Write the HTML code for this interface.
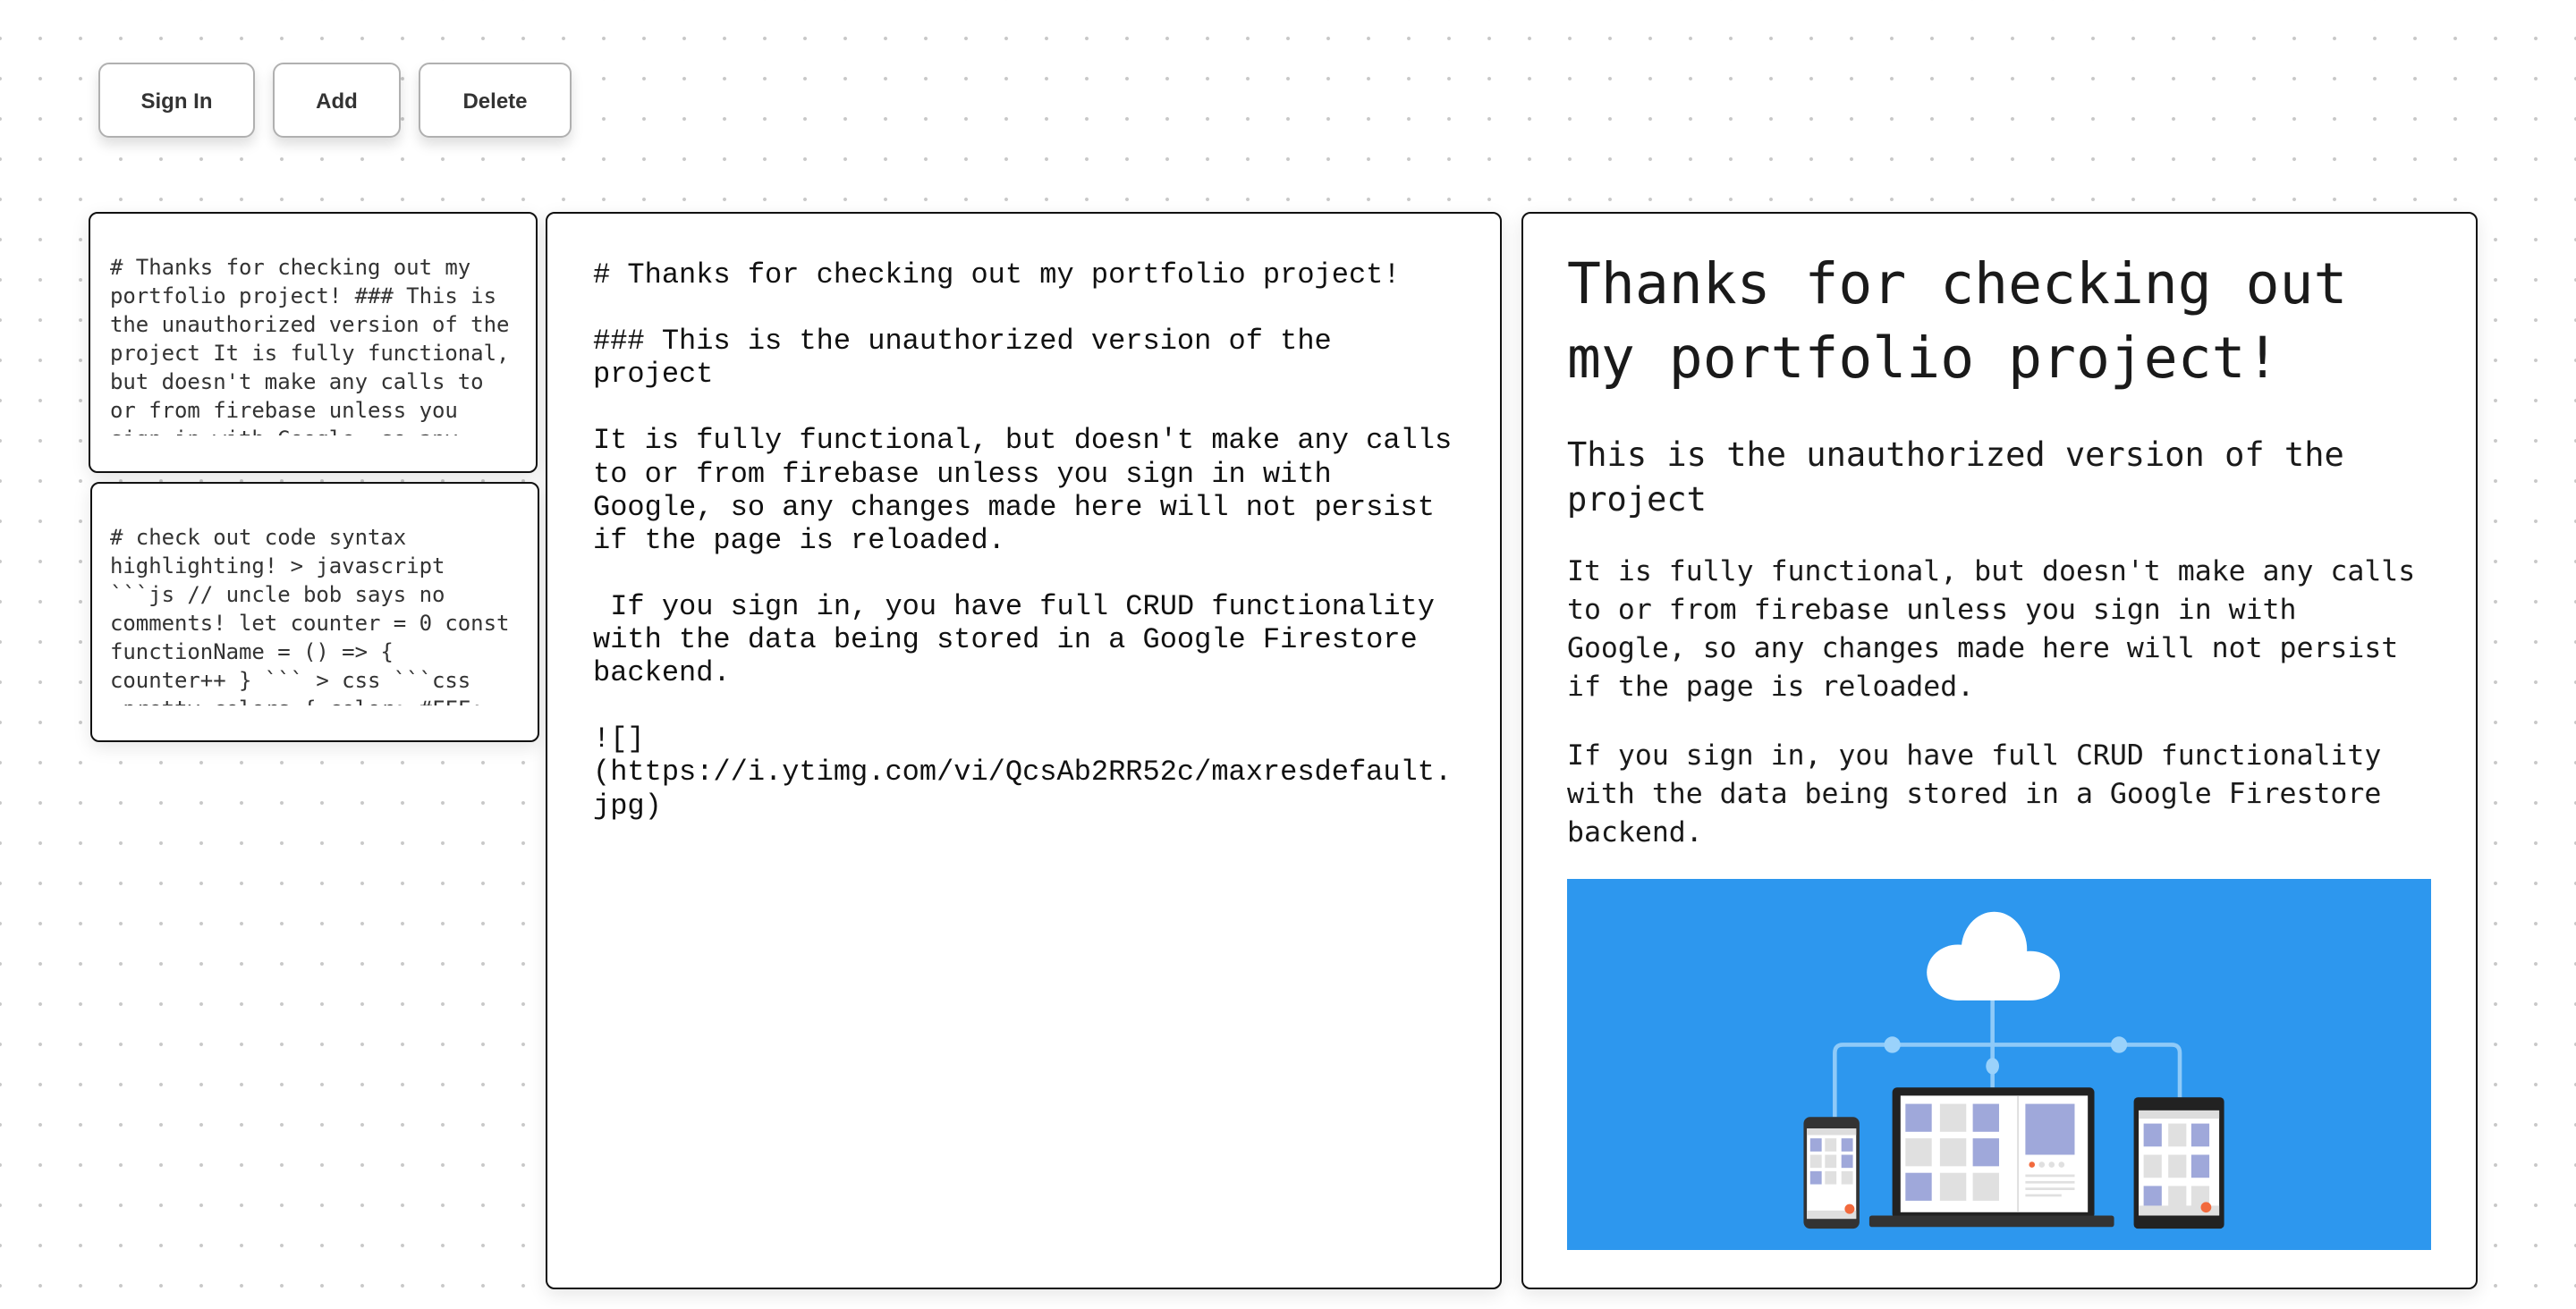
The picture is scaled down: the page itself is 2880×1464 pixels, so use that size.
<!DOCTYPE html>
<html><head><meta charset="utf-8"><style>
html,body{margin:0;padding:0}
body{width:2880px;height:1464px;position:relative;overflow:hidden;background:#fff;
background-image:radial-gradient(circle,#c8c8c8 1.7px,transparent 2.3px);background-size:45px 45px;background-position:-22.5px 20.5px}
.btn{position:absolute;top:70px;height:84px;background:#fff;border:2px solid #b0b0b0;border-radius:12px;box-shadow:0 8px 14px rgba(0,0,0,.13);font:bold 24px "Liberation Sans",sans-serif;color:#333;display:flex;align-items:center;justify-content:center;box-sizing:border-box;padding-top:4px}
.card{position:absolute;background:#fff;border:2px solid #111;border-radius:10px;box-sizing:border-box;box-shadow:0 6px 20px rgba(0,0,0,.10)}
.sm{position:absolute;left:123px;width:470px;height:204px;overflow:hidden;font:24px/32px "DejaVu Sans Mono",monospace;color:#333;white-space:pre;letter-spacing:-0.05px}
.mid{position:absolute;left:663px;top:289px;font:32px/37.1px "Liberation Mono",monospace;color:#111;white-space:pre}
.r{position:absolute;left:1752px;font-family:"DejaVu Sans Mono",monospace;color:#1a1a1a;white-space:pre}
</style></head><body>
<div class="btn" style="left:110px;width:175px">Sign In</div>
<div class="btn" style="left:305px;width:143px">Add</div>
<div class="btn" style="left:468px;width:171px">Delete</div>

<div class="card" style="left:99px;top:237px;width:502px;height:292px"></div>
<div class="sm" style="top:283px"># Thanks for checking out my
portfolio project! ### This is
the unauthorized version of the
project It is fully functional,
but doesn't make any calls to
or from firebase unless you
sign in with Google, so any</div>
<div class="card" style="left:101px;top:539px;width:502px;height:291px"></div>
<div class="sm" style="top:585px"># check out code syntax
highlighting! &gt; javascript
&#96;&#96;&#96;js // uncle bob says no
comments! let counter = 0 const
functionName = () =&gt; {
counter++ } &#96;&#96;&#96; &gt; css &#96;&#96;&#96;css
.pretty-colors { color: #FFF;</div>

<div class="card" style="left:610px;top:237px;width:1069px;height:1205px"></div>
<div class="mid"># Thanks for checking out my portfolio project!

### This is the unauthorized version of the
project

It is fully functional, but doesn't make any calls
to or from firebase unless you sign in with
Google, so any changes made here will not persist
if the page is reloaded.

 If you sign in, you have full CRUD functionality
with the data being stored in a Google Firestore
backend.

![]
(https://i.ytimg.com/vi/QcsAb2RR52c/maxresdefault.
jpg)</div>

<div class="card" style="left:1701px;top:237px;width:1069px;height:1205px"></div>
<div class="r" style="top:276px;font-size:63px;line-height:83px;font-weight:500">Thanks for checking out
my portfolio project!</div>
<div class="r" style="top:484px;font-size:37px;line-height:50px">This is the unauthorized version of the
project</div>
<div class="r" style="top:618px;font-size:31.5px;line-height:43px">It is fully functional, but doesn't make any calls
to or from firebase unless you sign in with
Google, so any changes made here will not persist
if the page is reloaded.</div>
<div class="r" style="top:824px;font-size:31.5px;line-height:43px">If you sign in, you have full CRUD functionality
with the data being stored in a Google Firestore
backend.</div>

<svg style="position:absolute;left:1752px;top:983px" width="966" height="415" viewBox="954 535 526 226" preserveAspectRatio="none">
<rect x="954" y="535" width="526" height="226" fill="#2d97ee"/>
<g fill="none" stroke="#8fcaf8" stroke-width="2.5">
<path d="M1213 605 V662"/>
<path d="M1117 680 V641 Q1117 636 1122 636 H1322 Q1327 636 1327 641 V668"/>
</g>
<g fill="#9ad2fb"><ellipse cx="1152" cy="636" rx="5" ry="5"/><ellipse cx="1290" cy="636" rx="5" ry="5"/><ellipse cx="1213" cy="649" rx="4" ry="5"/></g>
<g fill="#fff">
<ellipse cx="1214" cy="578" rx="20" ry="23"/>
<ellipse cx="1192" cy="592" rx="19" ry="17"/>
<ellipse cx="1236" cy="594" rx="18" ry="15"/>
<rect x="1186" y="590" width="54" height="19" rx="6"/>
</g>
<rect x="1152" y="662" width="123" height="80" rx="3" fill="#222"/>
<rect x="1157" y="667" width="114" height="71" fill="#fff"/>
<rect x="1138" y="740" width="149" height="7" rx="1.5" fill="#333"/>
<g fill="#9fa8da"><rect x="1160" y="672" width="16" height="17"/><rect x="1201" y="672" width="16" height="17"/><rect x="1201" y="693" width="16" height="17"/><rect x="1160" y="714" width="16" height="17"/><rect x="1233" y="672" width="30" height="31"/></g>
<g fill="#e0e0e0"><rect x="1181" y="672" width="16" height="17"/><rect x="1160" y="693" width="16" height="17"/><rect x="1181" y="693" width="16" height="17"/><rect x="1181" y="714" width="16" height="17"/><rect x="1201" y="714" width="16" height="17"/>
<circle cx="1243" cy="709" r="1.8"/><circle cx="1249" cy="709" r="1.8"/><circle cx="1255" cy="709" r="1.8"/>
<rect x="1233" y="715" width="30" height="1.5"/><rect x="1233" y="719" width="30" height="1.5"/><rect x="1233" y="723" width="30" height="1.5"/><rect x="1233" y="727" width="22" height="1.5"/></g>
<rect x="1228" y="667" width="1" height="71" fill="#ddd"/>
<circle cx="1237" cy="709" r="1.8" fill="#f26a3d"/>
<rect x="1098" y="680" width="34" height="68" rx="4" fill="#333"/>
<rect x="1100" y="687" width="30" height="55" fill="#fff"/>
<rect x="1100" y="687" width="30" height="4" fill="#ddd"/>
<g fill="#9fa8da"><rect x="1102" y="693" width="7" height="8"/><rect x="1121" y="693" width="7" height="8"/><rect x="1121" y="703" width="7" height="8"/><rect x="1102" y="713" width="7" height="8"/></g>
<g fill="#e0e0e0"><rect x="1111" y="693" width="7" height="8"/><rect x="1102" y="703" width="7" height="8"/><rect x="1111" y="703" width="7" height="8"/><rect x="1111" y="713" width="7" height="8"/><rect x="1121" y="713" width="7" height="8"/><rect x="1100" y="737" width="30" height="5"/></g>
<circle cx="1126" cy="736" r="3" fill="#f26a3d"/>
<rect x="1299" y="668" width="55" height="80" rx="2.5" fill="#222"/>
<rect x="1302" y="676" width="49" height="64" fill="#fff"/>
<rect x="1302" y="676" width="49" height="5" fill="#ddd"/>
<g fill="#9fa8da"><rect x="1305" y="684" width="11" height="14"/><rect x="1334" y="684" width="11" height="14"/><rect x="1334" y="703" width="11" height="14"/><rect x="1305" y="722" width="11" height="14"/></g>
<g fill="#e0e0e0"><rect x="1320" y="684" width="11" height="14"/><rect x="1305" y="703" width="11" height="14"/><rect x="1320" y="703" width="11" height="14"/><rect x="1320" y="722" width="11" height="14"/><rect x="1334" y="722" width="11" height="14"/><rect x="1302" y="734" width="49" height="6"/></g>
<circle cx="1343" cy="735" r="3.2" fill="#f26a3d"/>
</svg>
</body></html>
